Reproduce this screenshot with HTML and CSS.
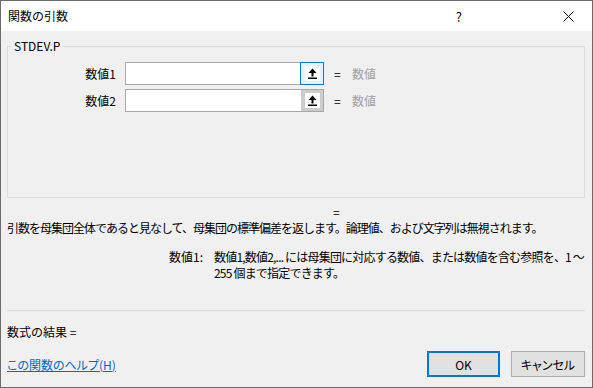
FILE: index.html
```html
<!DOCTYPE html>
<html lang="ja">
<head>
    <meta charset="UTF-8">
    <title>関数の引数</title>
    <link rel="stylesheet" href="styles.css">
</head>
<body>
    <div class="dialog">
        <div class="titlebar">
            <span class="title">関数の引数</span>
            <span class="help-btn">?</span>
            <span class="close-btn">
                <svg width="11" height="11" viewBox="0 0 11 11"><path d="M0.5 0.5 L10.5 10.5 M10.5 0.5 L0.5 10.5" stroke="#000" stroke-width="1"/></svg>
            </span>
        </div>

        <div class="content">
            <fieldset class="args">
                <legend>STDEV.P</legend>
                <div class="arg-row">
                    <label class="arg-label">数値1</label>
                    <div class="ref-input">
                        <div class="field"></div>
                        <div class="pick active">
                            <span class="pick-face">
                                <svg width="9" height="11" viewBox="0 0 9 11"><path d="M4.5 0.5 L8.5 5 L0.5 5 Z" fill="#000"/><rect x="3.5" y="4.5" width="2" height="4" fill="#000"/><rect x="0" y="9.5" width="9" height="1.5" fill="#000"/></svg>
                            </span>
                        </div>
                    </div>
                    <span class="eq">=</span>
                    <span class="arg-value">数値</span>
                </div>
                <div class="arg-row">
                    <label class="arg-label">数値2</label>
                    <div class="ref-input">
                        <div class="field"></div>
                        <div class="pick">
                            <span class="pick-face">
                                <svg width="9" height="11" viewBox="0 0 9 11"><path d="M4.5 0.5 L8.5 5 L0.5 5 Z" fill="#000"/><rect x="3.5" y="4.5" width="2" height="4" fill="#000"/><rect x="0" y="9.5" width="9" height="1.5" fill="#000"/></svg>
                            </span>
                        </div>
                    </div>
                    <span class="eq">=</span>
                    <span class="arg-value">数値</span>
                </div>
            </fieldset>

            <div class="result-eq">=</div>
            <div class="description">引数を母集団全体であると見なして、母集団の標準偏差を返します。論理値、および文字列は無視されます。</div>

            <div class="arg-help">
                <span class="arg-help-name">数値1:</span>
                <span class="arg-help-text">数値1,数値2,... には母集団に対応する数値、または数値を含む参照を、1 ～<br>255 個まで指定できます。</span>
            </div>

            <div class="separator"></div>

            <div class="formula-result">数式の結果 =</div>

            <div class="footer">
                <a class="help-link" href="#">この関数のヘルプ(H)</a>
                <div class="buttons">
                    <button class="btn btn-default">OK</button>
                    <button class="btn">キャンセル</button>
                </div>
            </div>
        </div>
    </div>
</body>
</html>
```

FILE: styles.css
```css
body {
    margin: 0;
    font-family: "Noto Sans CJK JP", "Noto Sans", sans-serif;
    font-size: 12px;
    color: #000;
}
.dialog {
    width: 593px;
    height: 388px;
    box-sizing: border-box;
    border: 1px solid #6b6b6b;
    background: #f0f0f0;
    display: flex;
    flex-direction: column;
}
.titlebar {
    height: 30px;
    background: #fff;
    display: flex;
    align-items: center;
    padding-left: 7px;
}
.title {
    flex: 1;
    line-height: 16px;
}
.help-btn {
    font-size: 13px;
    margin-right: 101px;
}
.close-btn {
    display: flex;
    margin-right: 18px;
}
.content {
    padding: 0 7px 0 6px;
    display: flex;
    flex-direction: column;
}
.args {
    margin: 7px 0 0 0;
    padding: 8px 0 85px 0;
    border: 1px solid #dcdcdc;
    min-width: 0;
}
.args legend {
    margin-left: 3px;
    padding: 0 3px;
    line-height: 16px;
}
.arg-row {
    display: flex;
    align-items: center;
    height: 23px;
}
.arg-row + .arg-row {
    margin-top: 4px;
}
.arg-label {
    width: 108px;
    text-align: right;
    margin-right: 9px;
}
.ref-input {
    width: 199px;
    height: 23px;
    box-sizing: border-box;
    border: 1px solid #a8a8a8;
    display: flex;
}
.field {
    flex: 1;
    background: #fff;
}
.pick {
    width: 22px;
    background: #cccccc;
    display: flex;
    align-items: center;
    justify-content: center;
}
.pick.active {
    margin: -1px -1px -1px 0;
    border: 1px solid #0078d7;
    background: #e5f1fb;
}
.pick-face {
    width: 15px;
    height: 15px;
    background: #fff;
    display: flex;
    align-items: center;
    justify-content: center;
}
.eq {
    width: 18px;
    margin-left: 10px;
}
.arg-value {
    color: #a0a0a0;
}
.result-eq {
    margin-top: 6px;
    padding-left: 326px;
    line-height: 16px;
}
.description {
    line-height: 16px;
    white-space: nowrap;
    letter-spacing: -1px;
}
.arg-help {
    margin-top: 13px;
    display: flex;
    line-height: 16px;
    padding-left: 162px;
}
.arg-help-name {
    width: 45px;
    flex-shrink: 0;
    white-space: nowrap;
}
.arg-help-text {
    white-space: nowrap;
    letter-spacing: -0.8px;
}
.separator {
    margin-top: 29px;
    height: 1px;
    background: #dcdcdc;
}
.formula-result {
    margin-top: 13px;
    line-height: 16px;
}
.footer {
    margin-top: 11px;
    display: flex;
    align-items: center;
}
.help-link {
    flex: 1;
    color: #0066cc;
    text-decoration: underline;
    font-feature-settings: "palt";
}
.buttons {
    display: flex;
    gap: 11px;
}
.btn {
    width: 74px;
    height: 26px;
    font-family: inherit;
    font-size: 12px;
    font-feature-settings: "palt";
    background: #e1e1e1;
    border: 1px solid #adadad;
    padding: 0;
    color: #000;
}
.btn-default {
    width: 73px;
    border: 2px solid #0078d7;
}
```
